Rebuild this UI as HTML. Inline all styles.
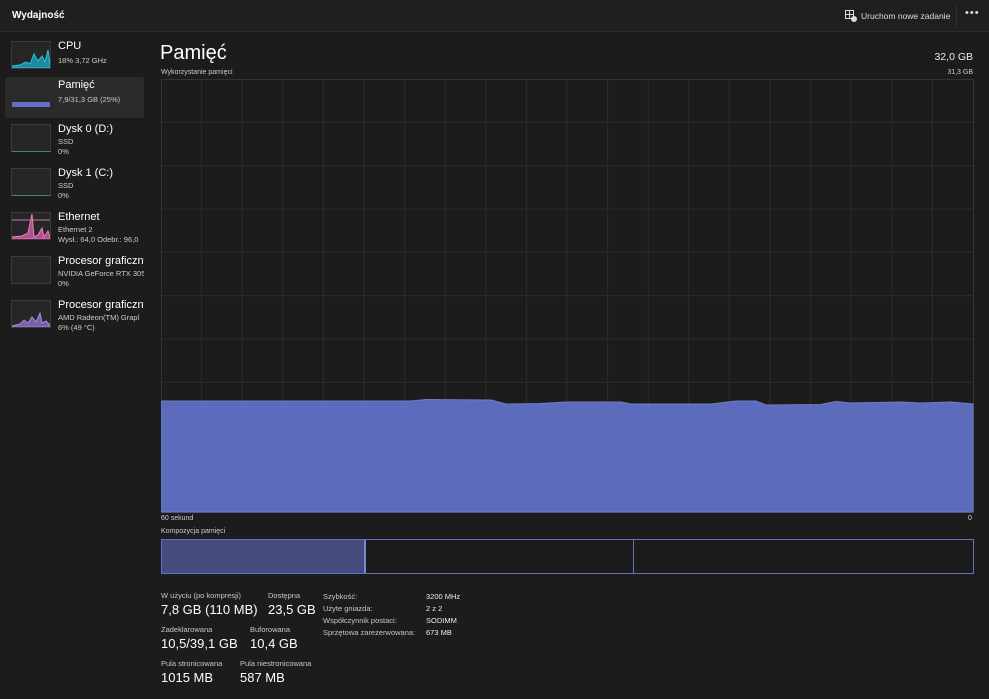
<!DOCTYPE html>
<html><head><meta charset="utf-8"><style>
*{margin:0;padding:0;box-sizing:border-box}
body{width:989px;height:699px;background:#1c1c1c;font-family:"Liberation Sans",sans-serif;color:#fff;position:relative;overflow:hidden}
.top{position:absolute;left:0;top:0;width:989px;height:32px;background:#1f1f1f;border-bottom:1px solid #2c2c2c}
.a{position:absolute;white-space:nowrap}
.item{position:absolute;left:5px;width:139px;height:41px;white-space:nowrap;overflow:hidden}
.thumb{position:absolute;left:6px;top:3px;width:40px;height:28px;background:#262626;border:1px solid #3a3a3a}
.n{position:absolute;left:53px;top:2px;font-size:11px;color:#fff}
.s{position:absolute;left:53px;font-size:7.5px;color:#ccc}
.l{font-size:7.5px;color:#c8c8c8}
.v{font-size:13px;color:#fff}
</style></head><body>
<div class="top"></div>
<div class="a" style="left:12px;top:10px;font-size:10px;font-weight:bold">Wydajność</div>
<svg class="a" style="left:845px;top:10px" width="12" height="12" viewBox="0 0 12 12"><rect x="0.5" y="0.5" width="8" height="8" fill="none" stroke="#ddd"/><line x1="4.5" y1="0.5" x2="4.5" y2="8.5" stroke="#ddd"/><line x1="0.5" y1="4.5" x2="8.5" y2="4.5" stroke="#ddd"/><circle cx="9" cy="9" r="3" fill="#ddd"/></svg>
<div class="a" style="left:861px;top:11px;font-size:8.5px;color:#ddd">Uruchom nowe zadanie</div>
<div class="a" style="left:965px;top:7px;font-size:11px;color:#ddd;letter-spacing:1px">•••</div>
<div class="a" style="left:956px;top:5px;width:1px;height:22px;background:#2e2e2e"></div>

<div class="item" style="top:38px"><div class="thumb"><svg width="38" height="26"><polyline points="0,24 8,23 14,20 18,22 22,12 26,19 30,14 33,20 36,8 38,22 38,26 0,26" fill="#1d8aa0" stroke="#2dc4e0"/></svg></div><div class="n">CPU</div><div class="s" style="top:18px">18% 3,72 GHz</div></div>
<div class="item" style="top:77px;background:#2b2b2b;border-radius:3px"><div class="thumb" style="background:#2b2b2b;border-color:#2b2b2b"><svg width="38" height="26"><rect x="0" y="21" width="38" height="5" fill="#6470c4"/></svg></div><div class="n">Pamięć</div><div class="s" style="top:18px">7,9/31,3 GB (25%)</div></div>
<div class="item" style="top:121px"><div class="thumb" style="border-bottom-color:#3a8a70"></div><div class="n">Dysk 0 (D:)</div><div class="s" style="top:16px">SSD</div><div class="s" style="top:26px">0%</div></div>
<div class="item" style="top:165px"><div class="thumb" style="border-bottom-color:#3a8a70"></div><div class="n">Dysk 1 (C:)</div><div class="s" style="top:16px">SSD</div><div class="s" style="top:26px">0%</div></div>
<div class="item" style="top:209px"><div class="thumb"><svg width="38" height="26"><line x1="0" y1="7" x2="38" y2="7" stroke="#c87aa8"/><polyline points="0,24 10,23 16,20 20,1 22,24 26,22 30,15 32,24 36,18 38,24 38,26 0,26" fill="#b04f8e" stroke="#e880c0"/></svg></div><div class="n">Ethernet</div><div class="s" style="top:16px">Ethernet 2</div><div class="s" style="top:26px">Wysł.: 64,0 Odebr.: 96,0</div></div>
<div class="item" style="top:253px"><div class="thumb"></div><div class="n">Procesor graficzny</div><div class="s" style="top:16px">NVIDIA GeForce RTX 305</div><div class="s" style="top:26px">0%</div></div>
<div class="item" style="top:297px"><div class="thumb"><svg width="38" height="26"><polyline points="0,25 8,23 12,19 16,22 20,16 24,21 28,12 30,22 34,20 38,24 38,26 0,26" fill="#7a5fa8" stroke="#a88ad8"/></svg></div><div class="n">Procesor graficzny</div><div class="s" style="top:16px">AMD Radeon(TM) Grapl</div><div class="s" style="top:26px">6% (49 °C)</div></div>

<div class="a" style="left:160px;top:42px;font-size:20px">Pamięć</div>
<div class="a" style="right:16px;top:51px;font-size:10.5px;color:#eee">32,0 GB</div>
<div class="a" style="left:161px;top:69px;font-size:7px;color:#ccc">Wykorzystanie pamięci</div>
<div class="a" style="right:16px;top:69px;font-size:7px;color:#ccc">31,3 GB</div>

<svg class="a" style="left:161px;top:79px" width="813" height="434">
<g stroke="#2c2c2c" stroke-width="1">
<line x1="40.6" y1="0" x2="40.6" y2="434"/><line x1="81.2" y1="0" x2="81.2" y2="434"/><line x1="121.8" y1="0" x2="121.8" y2="434"/><line x1="162.4" y1="0" x2="162.4" y2="434"/><line x1="203" y1="0" x2="203" y2="434"/><line x1="243.6" y1="0" x2="243.6" y2="434"/><line x1="284.2" y1="0" x2="284.2" y2="434"/><line x1="324.8" y1="0" x2="324.8" y2="434"/><line x1="365.4" y1="0" x2="365.4" y2="434"/><line x1="406" y1="0" x2="406" y2="434"/><line x1="446.6" y1="0" x2="446.6" y2="434"/><line x1="487.2" y1="0" x2="487.2" y2="434"/><line x1="527.8" y1="0" x2="527.8" y2="434"/><line x1="568.4" y1="0" x2="568.4" y2="434"/><line x1="609" y1="0" x2="609" y2="434"/><line x1="649.6" y1="0" x2="649.6" y2="434"/><line x1="690.2" y1="0" x2="690.2" y2="434"/><line x1="730.8" y1="0" x2="730.8" y2="434"/><line x1="771.4" y1="0" x2="771.4" y2="434"/>
<line x1="0" y1="43.3" x2="813" y2="43.3"/><line x1="0" y1="86.6" x2="813" y2="86.6"/><line x1="0" y1="130" x2="813" y2="130"/><line x1="0" y1="173.3" x2="813" y2="173.3"/><line x1="0" y1="216.6" x2="813" y2="216.6"/><line x1="0" y1="260" x2="813" y2="260"/><line x1="0" y1="303.3" x2="813" y2="303.3"/>
</g>
<rect x="0.5" y="0.5" width="812" height="433" fill="none" stroke="#333"/>
<polygon points="0,322 250,322 265,320.5 330,321 345,325 380,324.5 405,323 460,323 470,325 550,325 575,322 595,322 605,326 660,325.5 675,322.5 690,324 740,323 760,324 790,323 812,325 812,433 0,433" fill="#5d6bbc" stroke="#6e7ccc"/>
</svg>
<div class="a" style="left:161px;top:515px;font-size:7px;color:#ccc">60 sekund</div>
<div class="a" style="left:968px;top:515px;font-size:7px;color:#ccc">0</div>
<div class="a" style="left:161px;top:528px;font-size:7px;color:#ccc">Kompozycja pamięci</div>
<div class="a" style="left:161px;top:539px;width:813px;height:35px;border:1px solid #6470c4"></div>
<div class="a" style="left:162px;top:540px;width:204px;height:33px;background:#454b7c;border-right:2px solid #7a86d8"></div>
<div class="a" style="left:633px;top:540px;width:1px;height:33px;background:#6470c4"></div>

<div class="a l" style="left:161px;top:591px">W użyciu (po kompresji)</div>
<div class="a l" style="left:268px;top:591px">Dostępna</div>
<div class="a v" style="left:161px;top:602px">7,8 GB (110 MB)</div>
<div class="a v" style="left:268px;top:602px">23,5 GB</div>
<div class="a l" style="left:161px;top:625px">Zadeklarowana</div>
<div class="a l" style="left:250px;top:625px">Buforowana</div>
<div class="a v" style="left:161px;top:636px">10,5/39,1 GB</div>
<div class="a v" style="left:250px;top:636px">10,4 GB</div>
<div class="a l" style="left:161px;top:659px">Pula stronicowana</div>
<div class="a l" style="left:240px;top:659px">Pula niestronicowana</div>
<div class="a v" style="left:161px;top:670px">1015 MB</div>
<div class="a v" style="left:240px;top:670px">587 MB</div>
<div class="a l" style="left:323px;top:591px;line-height:12px">Szybkość:<br>Użyte gniazda:<br>Współczynnik postaci:<br>Sprzętowa zarezerwowana:</div>
<div class="a l" style="left:426px;top:591px;line-height:12px;color:#eee">3200 MHz<br>2 z 2<br>SODIMM<br>673 MB</div>
</body></html>
